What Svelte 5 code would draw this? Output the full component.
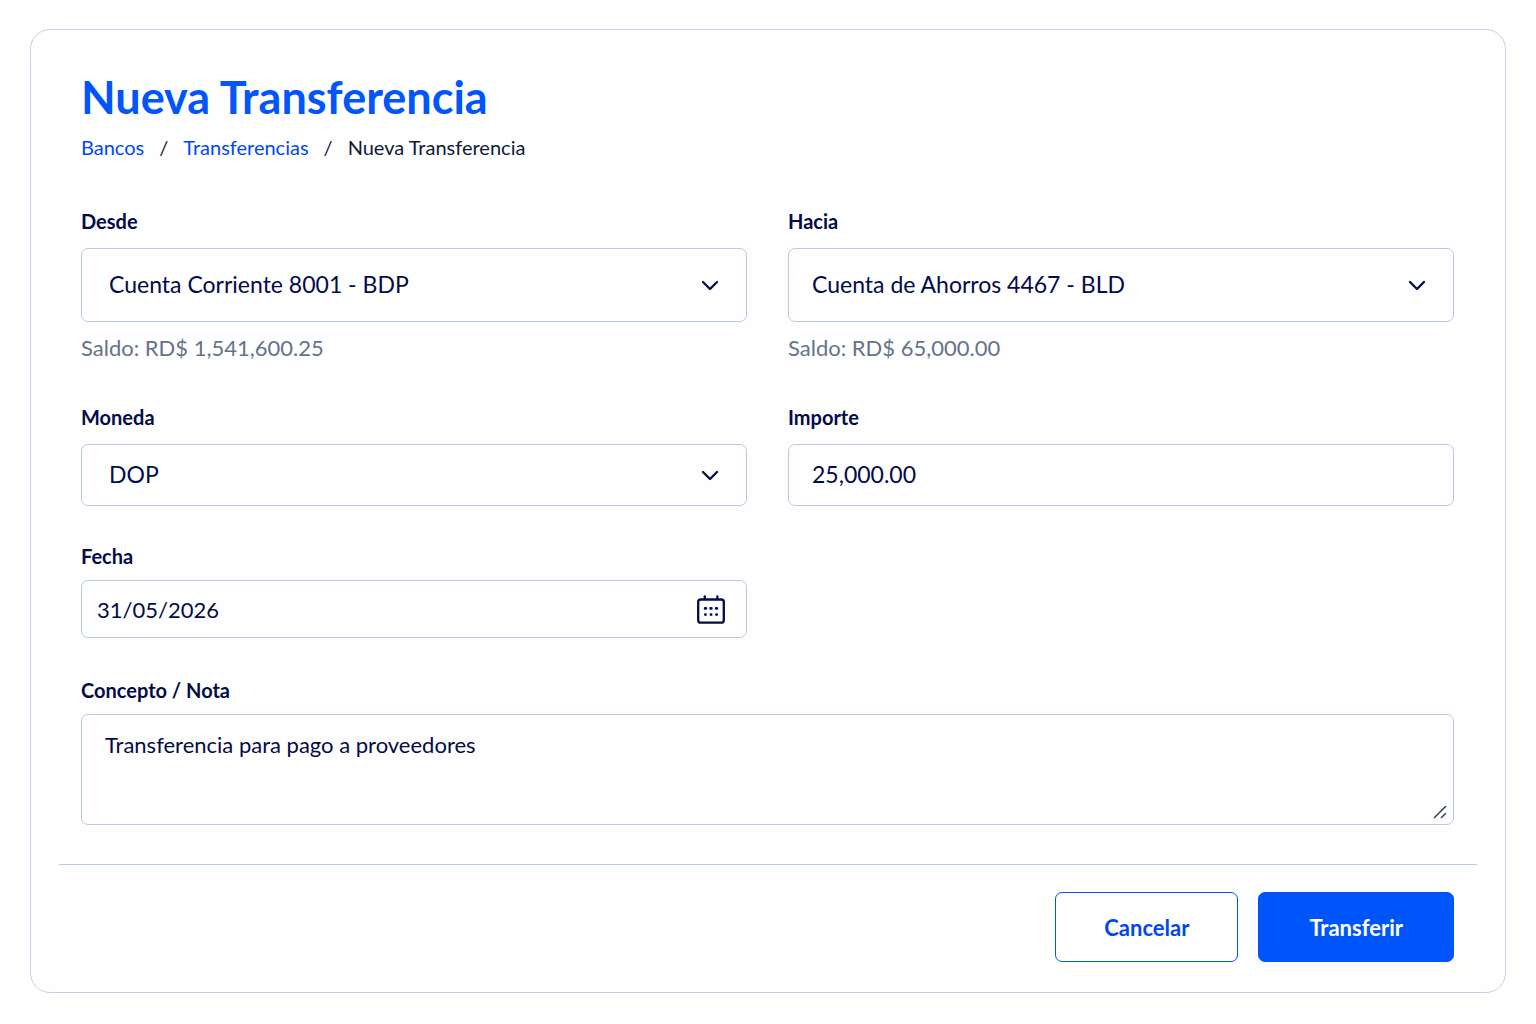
<script>
    let desde = '8001'
    let hacia = '4467'
    let moneda = 'DOP'
    let importe = '25,000.00'
    let fecha = '31/05/2026'
    let nota = 'Transferencia para pago a proveedores'

    const cuentas = [
        { id: '8001', nombre: 'Cuenta Corriente 8001 - BDP', saldo: '1,541,600.25' },
        { id: '4467', nombre: 'Cuenta de Ahorros 4467 - BLD', saldo: '65,000.00' }
    ]

    $: saldoDesde = cuentas.find(c => c.id === desde).saldo
    $: saldoHacia = cuentas.find(c => c.id === hacia).saldo
</script>

<style>
    :global(body) {
        margin: 0;
        background: #fefefe;
        font-family: Lato, "Noto Sans", sans-serif;
    }

    .card {
        margin: 29px 30px 30px;
        padding: 39px 28px 30px;
        border: 1px solid #c3d0e5;
        border-radius: 20px;
        color: #020b4b;
    }

    .content {
        padding: 0 23px 39px 22px;
        border-bottom: 1px solid #b9cae6;
    }

    h1 {
        margin: 0;
        font-size: 45px;
        line-height: 56px;
        font-weight: 700;
        color: #0055fb;
    }

    .breadcrumb {
        display: flex;
        gap: 15px;
        margin: 10px 0 50px;
        font-size: 20px;
        line-height: 24px;
        color: #101b38;
    }

    .breadcrumb a {
        color: #0048f5;
        text-decoration: none;
    }

    .row {
        display: grid;
        grid-template-columns: 1fr 1fr;
        column-gap: 41px;
        margin-bottom: 38px;
    }

    .accounts {
        margin-bottom: 45px;
    }

    .date {
        margin-bottom: 40px;
    }

    label {
        display: block;
        margin-bottom: 15px;
        font-size: 20px;
        line-height: 24px;
        font-weight: 700;
    }

    .date label, .note label {
        margin-bottom: 12px;
    }

    .control {
        display: grid;
        align-items: center;
    }

    .control > * {
        grid-area: 1 / 1;
    }

    select, input, textarea {
        box-sizing: border-box;
        width: 100%;
        height: 62px;
        margin: 0;
        padding: 0 23px 2px;
        border: 1px solid #b9cae6;
        border-radius: 7px;
        background: transparent;
        color: inherit;
        font-family: inherit;
        font-size: 23px;
        appearance: none;
    }

    .row > :first-child select {
        padding-left: 27px;
    }

    .accounts select {
        height: 74px;
    }

    .date input {
        height: 58px;
        padding: 0 15px;
        font-size: 22px;
    }

    textarea {
        height: 111px;
        padding: 15px 23px;
        font-size: 22px;
        line-height: 30px;
        resize: none;
    }

    .chevron, .calendar {
        justify-self: end;
        margin-right: 27px;
        pointer-events: none;
    }

    .calendar {
        display: flex;
        margin-right: 20px;
        padding: 0;
        border: 0;
        background: none;
        color: inherit;
        pointer-events: auto;
        cursor: pointer;
    }

    .grip {
        place-self: end;
        margin: 0 6px 6px 0;
        pointer-events: none;
    }

    .balance {
        margin: 14px 0 0;
        font-size: 22px;
        line-height: 24px;
        color: #65738a;
    }

    .actions {
        display: flex;
        justify-content: flex-end;
        gap: 20px;
        padding: 27px 23px 0 22px;
    }

    .btn {
        height: 70px;
        padding: 0 48px;
        border: 1px solid #0052f5;
        border-radius: 7px;
        background: transparent;
        color: #0048ee;
        font-family: inherit;
        font-size: 22px;
        font-weight: 700;
        cursor: pointer;
    }

    .primary {
        padding: 0 50px;
        background: #0055fa;
        color: #fff;
    }
</style>

{#snippet chevron()}
    <svg class="chevron" width="20" height="14" viewBox="0 0 20 14" fill="none" stroke="currentColor" stroke-width="2.3" stroke-linecap="round" stroke-linejoin="round" aria-hidden="true">
        <path d="M3 4 10 11 17 4" />
    </svg>
{/snippet}

<form class="card" on:submit|preventDefault>
    <div class="content">
        <h1>Nueva Transferencia</h1>
        <nav class="breadcrumb">
            <a href="#bancos">Bancos</a>
            <span>/</span>
            <a href="#transferencias">Transferencias</a>
            <span>/</span>
            <span>Nueva Transferencia</span>
        </nav>

        <div class="row accounts">
            <div>
                <label for="desde">Desde</label>
                <div class="control">
                    <select id="desde" bind:value={desde}>
                        {#each cuentas as cuenta}
                            <option value={cuenta.id}>{cuenta.nombre}</option>
                        {/each}
                    </select>
                    {@render chevron()}
                </div>
                <p class="balance">Saldo: RD$ {saldoDesde}</p>
            </div>
            <div>
                <label for="hacia">Hacia</label>
                <div class="control">
                    <select id="hacia" bind:value={hacia}>
                        {#each cuentas as cuenta}
                            <option value={cuenta.id}>{cuenta.nombre}</option>
                        {/each}
                    </select>
                    {@render chevron()}
                </div>
                <p class="balance">Saldo: RD$ {saldoHacia}</p>
            </div>
        </div>

        <div class="row">
            <div>
                <label for="moneda">Moneda</label>
                <div class="control">
                    <select id="moneda" bind:value={moneda}>
                        <option value="DOP">DOP</option>
                    </select>
                    {@render chevron()}
                </div>
            </div>
            <div>
                <label for="importe">Importe</label>
                <div class="control">
                    <input id="importe" type="text" inputmode="decimal" bind:value={importe}>
                </div>
            </div>
        </div>

        <div class="row date">
            <div>
                <label for="fecha">Fecha</label>
                <div class="control">
                    <input id="fecha" type="text" bind:value={fecha}>
                    <button class="calendar" type="button" aria-label="Abrir calendario">
                        <svg width="32" height="32" viewBox="0 0 32 32" fill="none" stroke="currentColor" stroke-width="2.3" stroke-linecap="round" aria-hidden="true">
                            <rect x="3.2" y="6.5" width="25.6" height="23.2" rx="2.5" />
                            <path d="M9.8 6V3.4M22.4 6V3.4" />
                            <path stroke-width="2.9" d="M10.2 15.4h.6M15.7 15.4h.6M21.2 15.4h.6M10.4 21.6h.1M16 21.6h.1M21.5 21.6h.1" />
                        </svg>
                    </button>
                </div>
            </div>
        </div>

        <div class="note">
            <label for="nota">Concepto / Nota</label>
            <div class="control">
                <textarea id="nota" bind:value={nota}></textarea>
                <svg class="grip" width="16" height="14" viewBox="0 0 16 14" fill="none" stroke="#3d4657" stroke-width="1.6" stroke-linecap="round" aria-hidden="true">
                    <path d="M2.5 12.5 13.5 1.5M9.5 12.5 13.5 8.5" />
                </svg>
            </div>
        </div>
    </div>

    <div class="actions">
        <button class="btn" type="button">Cancelar</button>
        <button class="btn primary" type="submit">Transferir</button>
    </div>
</form>
